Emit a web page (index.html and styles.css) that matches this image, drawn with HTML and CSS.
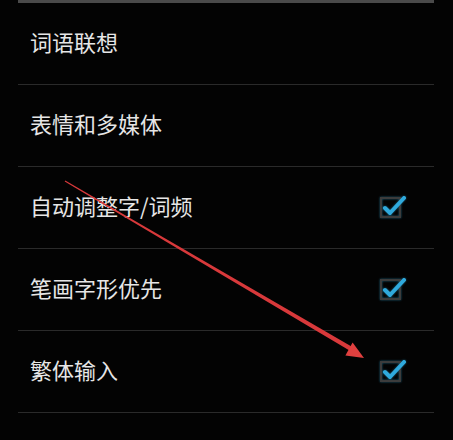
FILE: index.html
```html
<!DOCTYPE html>
<html lang="zh-CN">
<head>
<meta charset="utf-8">
<title>设置</title>
<link rel="stylesheet" href="styles.css">
</head>
<body>
<div class="screen">
  <ul class="list">
    <li class="row"><span class="label">词语联想</span></li>
    <li class="row"><span class="label">表情和多媒体</span></li>
    <li class="row"><span class="label">自动调整字/词频</span>
      <svg class="check" viewBox="0 0 28 26" width="28" height="26"><rect x="1" y="5" width="19" height="19" fill="none" stroke="#3c3c3c" stroke-width="2"/><path d="M5 15 L10 20 L24 5" fill="none" stroke="#2fa9dc" stroke-width="4" stroke-linecap="round" stroke-linejoin="round"/></svg>
    </li>
    <li class="row"><span class="label">笔画字形优先</span>
      <svg class="check" viewBox="0 0 28 26" width="28" height="26"><rect x="1" y="5" width="19" height="19" fill="none" stroke="#3c3c3c" stroke-width="2"/><path d="M5 15 L10 20 L24 5" fill="none" stroke="#2fa9dc" stroke-width="4" stroke-linecap="round" stroke-linejoin="round"/></svg>
    </li>
    <li class="row"><span class="label">繁体输入</span>
      <svg class="check" viewBox="0 0 28 26" width="28" height="26"><rect x="1" y="5" width="19" height="19" fill="none" stroke="#3c3c3c" stroke-width="2"/><path d="M5 15 L10 20 L24 5" fill="none" stroke="#2fa9dc" stroke-width="4" stroke-linecap="round" stroke-linejoin="round"/></svg>
    </li>
    <li class="row"><span class="label"></span>
      <svg class="check" viewBox="0 0 28 26" width="28" height="26"><rect x="1" y="5" width="19" height="19" fill="none" stroke="#3c3c3c" stroke-width="2"/><path d="M5 15 L10 20 L24 5" fill="none" stroke="#2fa9dc" stroke-width="4" stroke-linecap="round" stroke-linejoin="round"/></svg>
    </li>
  </ul>
  <svg class="arrow" viewBox="0 0 453 440" width="453" height="440">
    <polygon points="64.7,181.4 65.3,180.6 351.5,346.6 349.5,350.4" fill="#d8393b"/>
    <polygon points="364,358 345.4,355.5 352.6,342.5" fill="#e0403f"/>
  </svg>
</div>
</body>
</html>
```
FILE: styles.css
```css
html, body {
  margin: 0;
  padding: 0;
  background: #030303;
}
.screen {
  position: relative;
  width: 453px;
  height: 440px;
  overflow: hidden;
  background: #030303;
}
.list {
  list-style: none;
  margin: 0 19px 0 18px;
  padding: 0;
  border-top: 3px solid #4a4a4a;
}
.row {
  display: flex;
  align-items: center;
  justify-content: space-between;
  height: 81px;
  border-bottom: 1px solid #2a2a2a;
  padding: 0 26px 0 12px;
}
.label {
  font-family: "Noto Sans CJK SC", "Noto Sans", sans-serif;
  font-size: 22px;
  color: #e6e6e6;
  line-height: 1;
  margin-bottom: 5px;
}
.check {
  display: block;
  margin-top: -4px;
  filter: drop-shadow(0 0 1px rgba(51, 181, 229, 0.5));
}
.arrow {
  position: absolute;
  left: 0;
  top: 0;
  pointer-events: none;
}
```
